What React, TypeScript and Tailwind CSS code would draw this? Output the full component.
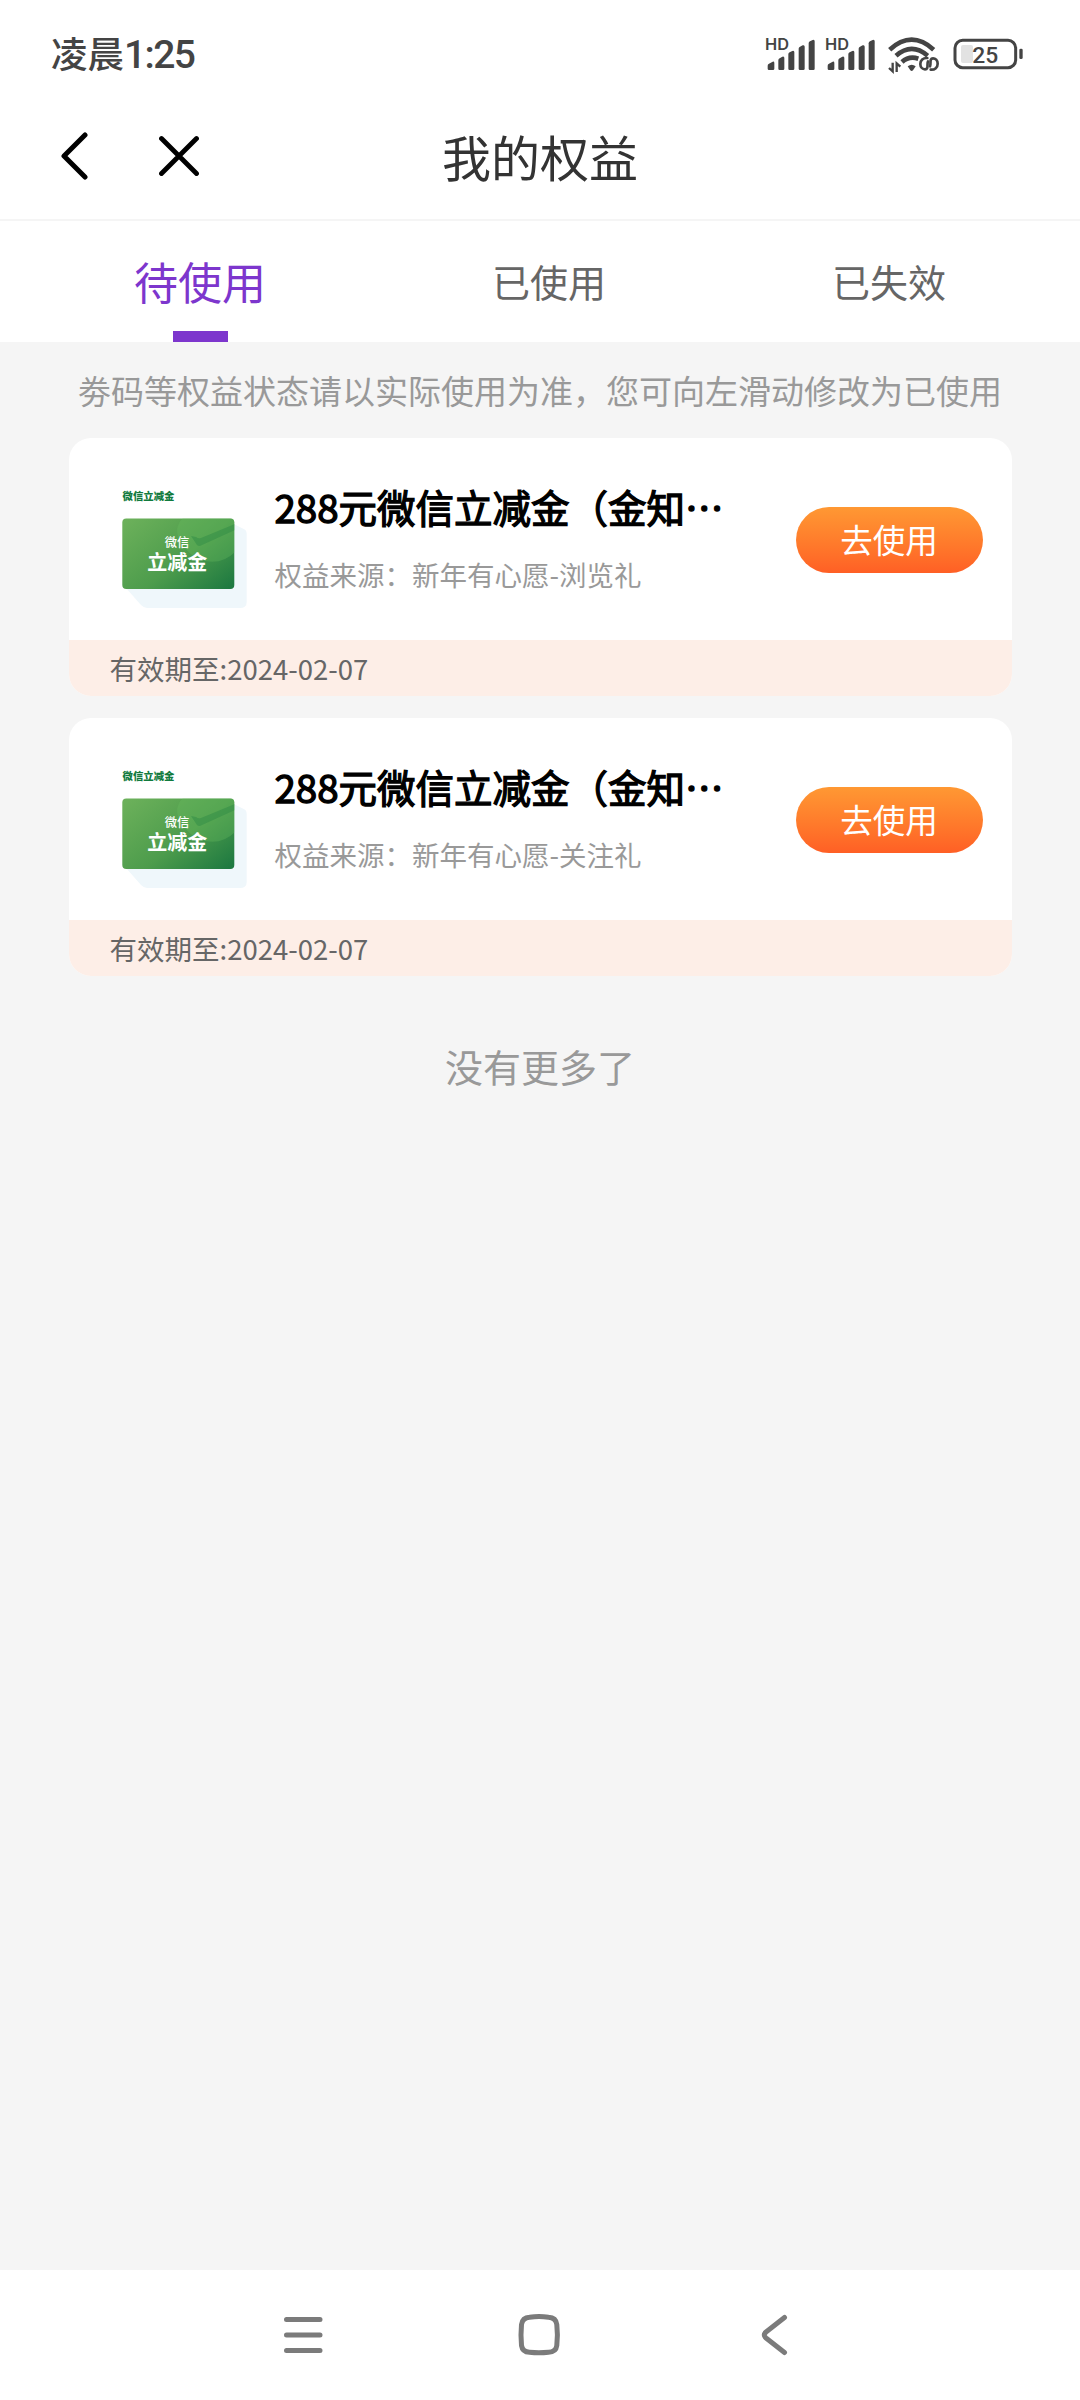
import type { ReactNode } from 'react'

interface Benefit {
  id: number
  title: string
  source: string
  expires: string
}

const TABS = ['待使用', '已使用', '已失效']

const BENEFITS: Benefit[] = [
  { id: 1, title: '288元微信立减金（金知…', source: '新年有心愿-浏览礼', expires: '2024-02-07' },
  { id: 2, title: '288元微信立减金（金知…', source: '新年有心愿-关注礼', expires: '2024-02-07' },
]

/* ── Status bar ── */

function Signal({ x }: { x: number }) {
  return (
    <g transform={`translate(${x} 0)`}>
      <text x="-3" y="90" fontSize="48" fontWeight="600" textLength="72" lengthAdjust="spacingAndGlyphs">HD</text>
      <path d="M5 146v-9q0-4 4-6l11-6q5-1 5 4v17q0 4-4 4H9q-4 0-4-4z" />
      <path d="M37 146v-25q0-4 4-6l8-5q6-2 6 4v32q0 4-4 4H41q-4 0-4-4z" />
      <path d="M67 146v-43q0-4 4-6l8-4q6-2 6 4v49q0 4-4 4H71q-4 0-4-4z" />
      <path d="M98 146v-60q0-4 4-6l8-4q6-2 6 4v66q0 4-4 4h-10q-4 0-4-4z" />
      <path d="M128 146v-76q0-4 4-6l8-4q6-2 6 4v82q0 4-4 4h-10q-4 0-4-4z" />
    </g>
  )
}

function StatusIcons() {
  return (
    <svg width="300" height="70" viewBox="0 0 900 210" fill="#444" className="font-['Inter',sans-serif]">
      <Signal x={78} />
      <Signal x={258} />
      {/* wifi */}
      <g fill="none" stroke="#444" strokeWidth="14">
        <path d="M449 89Q515 29 581 89" />
        <path d="M468 107Q515 66 563 107" />
        <path d="M486 126Q507 107 535 116" />
      </g>
      <path d="M503 139q12-9 24 0l-8 12q-4 4-8 0z" />
      <g fill="none" stroke="#444" strokeWidth="7">
        <path d="M458 128v26l-11-10M470 156v-26l11 10" />
      </g>
      <g fill="none" stroke="#444" strokeWidth="8" strokeLinecap="round">
        <path d="M562 114c-13-1-21 7-21 18 0 10 7 16 14 16 12 0 5-16 9-24" />
        <path d="M572 149c13 1 21-7 21-18 0-10-7-16-14-16-12 0-5 16-9 24" />
      </g>
      {/* battery */}
      <rect x="663" y="75" width="36" height="54" rx="6" fill="#e2e2e2" />
      <rect x="645" y="61" width="182" height="82" rx="23" fill="none" stroke="#444" strokeWidth="9" />
      <rect x="838" y="86" width="10" height="31" rx="4" />
      <text x="736" y="128" fontSize="68" fontWeight="500" textAnchor="middle" textLength="78" lengthAdjust="spacingAndGlyphs" className="font-['Roboto',sans-serif]">25</text>
    </svg>
  )
}

function StatusBar() {
  return (
    <div className="h-[100px] flex items-start justify-between pl-[51px] pr-10 text-[#444]">
      <div className="flex items-baseline pt-[26px] text-[36.500px] leading-[54px] font-medium">
        凌晨
        <span className="font-['Roboto',sans-serif] text-[39px] tracking-[-1.600px]">1:25</span>
      </div>
      <div className="pt-5">
        <StatusIcons />
      </div>
    </div>
  )
}

/* ── Header and tabs ── */

function Header() {
  return (
    <header className="h-[121px] grid grid-cols-3 items-start border-b-2 border-[#f5f5f5]">
      <div className="flex items-center gap-[71px] pl-[60px] pt-[31px]">
        <svg width="28" height="50" viewBox="0 0 28 50" fill="none" stroke="#000" strokeWidth="5" strokeLinecap="round" strokeLinejoin="round">
          <path d="M25 4L4 25l21 21" />
        </svg>
        <svg width="40" height="50" viewBox="0 0 40 50" fill="none" stroke="#000" strokeWidth="4.8" strokeLinecap="round">
          <path d="M2.500 7.500l35 35M37.500 7.500l-35 35" />
        </svg>
      </div>
      <h1 className="pt-5 text-center text-[49px] leading-[72px] text-[#333]">我的权益</h1>
    </header>
  )
}

function Tabs() {
  return (
    <nav className="h-[121px] flex items-start justify-between pl-[134px] pr-[134px]">
      {TABS.map((tab, i) => (
        <div
          key={tab}
          className={`h-full flex flex-col items-center justify-between leading-[64px] ${i === 0 ? 'pt-7 text-[44px] text-[#7d36cd]' : 'pt-7 text-[38px] text-[#666]'}`}
        >
          {tab}
          {i === 0 && <i className="block w-[55px] h-[11px] bg-[#7d36cd]" />}
        </div>
      ))}
    </nav>
  )
}

/* ── Benefit card ── */

function Thumb() {
  return (
    <svg width="134" height="130" viewBox="0 0 134 130" className="shrink-0">
      <defs>
        <linearGradient id="green" x1="0" y1="0.1" x2="1" y2="0.9">
          <stop offset="0" stopColor="#6bb05a" />
          <stop offset="0.55" stopColor="#4d9c4c" />
          <stop offset="1" stopColor="#1f7a41" />
        </linearGradient>
        <clipPath id="face">
          <rect x="8.300" y="34.500" width="112" height="70.500" rx="4" />
        </clipPath>
      </defs>
      <text x="8.500" y="16" fontSize="10.400" fontWeight="900" fill="#117a3d">微信立减金</text>
      <path d="M12 104l15 17q3 3 6 3h93q6.700 0 6.700-6V50q0-4-3-5l-10-5z" fill="#eff7fb" />
      <g clipPath="url(#face)">
        <rect x="8" y="34" width="113" height="72" fill="url(#green)" />
        <path d="M69 34q-10 10-3 23 8 14 21 19 20 6 34-8V34z" fill="#6abf60" opacity="0.32" />
        <path d="M77 52l6 9q2 2 5 0l33-15v-6L87 54q-3 1-5-1z" fill="#2f8c45" opacity="0.5" />
      </g>
      <text x="63" y="63" fontSize="12.300" fontWeight="500" textAnchor="middle" fill="#fff">微信</text>
      <text x="63.300" y="85.800" fontSize="20" fontWeight="700" textAnchor="middle" fill="#fff">立减金</text>
    </svg>
  )
}

function BenefitCard({ title, source, expires }: Omit<Benefit, 'id'>) {
  return (
    <article className="w-[943px] h-[258px] flex flex-col overflow-hidden rounded-[22px] bg-white">
      <div className="h-[203.500px] flex items-start pl-[45px] pr-[29px]">
        <div className="pt-[46px]">
          <Thumb />
        </div>
        <div className="ml-[27px] pt-10">
          <h2 className="whitespace-nowrap text-[38.500px] leading-[56px] text-black [-webkit-text-stroke:1.300px_black]">{title}</h2>
          <p className="pt-5 text-[27.500px] leading-10 text-[#999]">权益来源：{source}</p>
        </div>
        <button className="ml-auto mt-[69px] w-[187px] h-[66px] rounded-full bg-linear-to-b from-[#ff9833] to-[#ff5f25] text-[32.500px] leading-[64px] text-white">
          <span className="block -mt-0.5">去使用</span>
        </button>
      </div>
      <div className="flex-1 bg-[#fdeee7] pl-[41px] text-[27.500px] leading-[56px] text-[#666]">有效期至:{expires}</div>
    </article>
  )
}

/* ── System navigation bar ── */

function NavIcon({ children }: { children: ReactNode }) {
  return (
    <svg width="50" height="50" viewBox="0 0 50 50" fill="none" stroke="#7b7b7b" strokeWidth="5" strokeLinecap="round" strokeLinejoin="round">
      {children}
    </svg>
  )
}

function SystemNav() {
  return (
    <footer className="h-[130px] flex items-start justify-between bg-white px-[278px] pt-10">
      <NavIcon>
        <path d="M8.500 9.500h33.500M8.500 25h33.500M8.500 40.500h33.500" />
      </NavIcon>
      <NavIcon>
        <path d="M14.500 7.200Q24 6 33.500 7.200 41 7.500 41.800 14.500 43 25 41.800 35.500 41 42 33.500 42.300 24 43.300 14.500 42.300 7.500 42 6.500 35.500 5.500 25 6.500 14.500 7.500 7.500 14.500 7.200z" />
      </NavIcon>
      <NavIcon>
        <path d="M32.500 7.500L14 22q-3.500 3 0 6l18.500 14.500" />
      </NavIcon>
    </footer>
  )
}

export default function App() {
  return (
    <div className="w-[1080px] h-[2400px] flex flex-col overflow-hidden bg-white font-['Noto_Sans_CJK_SC',sans-serif]">
      <StatusBar />
      <Header />
      <Tabs />
      <main className="flex-1 flex flex-col items-center bg-[#f5f5f5]">
        <p className="h-24 pt-6 whitespace-nowrap text-[33px] leading-[48px] text-[#999]">
          劵码等权益状态请以实际使用为准，您可向左滑动修改为已使用
        </p>
        <div className="flex flex-col gap-[22px]">
          {BENEFITS.map(({ id, ...benefit }) => (
            <BenefitCard key={id} {...benefit} />
          ))}
        </div>
        <p className="pt-[62px] text-[38px] leading-[56px] text-[#999]">没有更多了</p>
      </main>
      <SystemNav />
    </div>
  )
}
